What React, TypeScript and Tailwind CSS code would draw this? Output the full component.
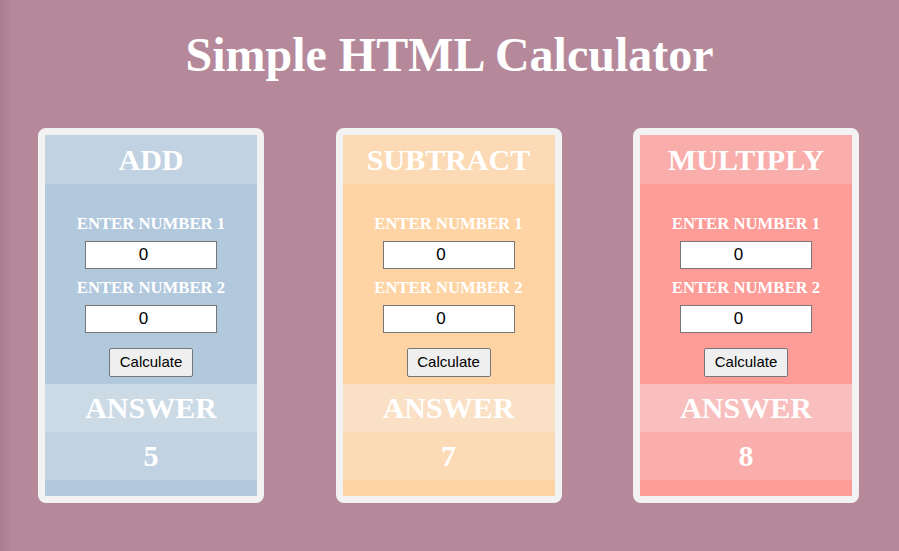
import { useState } from "react";

type Op = {
  title: string;
  fn: (a: number, b: number) => number;
  initial: number;
  body: string;
  head: string;
  answerHead: string;
  answerValue: string;
};

const ops: Op[] = [
  {
    title: "ADD",
    fn: (a, b) => a + b,
    initial: 5,
    body: "bg-[#b2c8dd]",
    head: "bg-[#c1d2e2]",
    answerHead: "bg-[#ccdae6]",
    answerValue: "bg-[#c1d2e2]",
  },
  {
    title: "SUBTRACT",
    fn: (a, b) => a - b,
    initial: 7,
    body: "bg-[#fed4a4]",
    head: "bg-[#fcdab5]",
    answerHead: "bg-[#fae0c5]",
    answerValue: "bg-[#fcdab5]",
  },
  {
    title: "MULTIPLY",
    fn: (a, b) => a * b,
    initial: 8,
    body: "bg-[#fe9c98]",
    head: "bg-[#faaeab]",
    answerHead: "bg-[#f8bfbe]",
    answerValue: "bg-[#faaeab]",
  },
];

function CalcCard({ op }: { op: Op }) {
  const [a, setA] = useState("0");
  const [b, setB] = useState("0");
  const [answer, setAnswer] = useState<number>(op.initial);

  return (
    <div className="w-[226px] rounded-[8px] border-[7px] border-[#f2f2f2] bg-[#f2f2f2]">
      <div className={`${op.body} flex flex-col text-white`}>
        <h2 className={`${op.head} h-[49px] text-center text-[30px] font-bold leading-[49px]`}>
          {op.title}
        </h2>

        <div className="flex flex-col items-center pt-[30px] pb-[7px]">
          <label className="text-[16.7px] font-bold leading-[20px]">ENTER NUMBER 1</label>
          <input
            value={a}
            onChange={(e) => setA(e.target.value)}
            className="mt-[7px] h-[28px] w-[132px] border border-[#767676] bg-white pr-[15px] text-center font-['Liberation_Sans',sans-serif] text-[17px] text-black outline-none"
          />
          <label className="mt-[9px] text-[16.7px] font-bold leading-[20px]">ENTER NUMBER 2</label>
          <input
            value={b}
            onChange={(e) => setB(e.target.value)}
            className="mt-[7px] h-[28px] w-[132px] border border-[#767676] bg-white pr-[15px] text-center font-['Liberation_Sans',sans-serif] text-[17px] text-black outline-none"
          />
          <button
            onClick={() => setAnswer(op.fn(Number(a) || 0, Number(b) || 0))}
            className="mt-[15px] h-[29px] w-[84px] rounded-[2px] border border-[#767676] bg-[#efefef] font-['Liberation_Sans',sans-serif] text-[15px] text-black"
          >
            Calculate
          </button>
        </div>

        <h2 className={`${op.answerHead} h-[48px] text-center text-[30px] font-bold leading-[48px]`}>
          ANSWER
        </h2>
        <div className={`${op.answerValue} h-[48px] text-center text-[30px] font-bold leading-[48px]`}>
          {answer}
        </div>
        <div className="h-[16px]" />
      </div>
    </div>
  );
}

export default function App() {
  return (
    <div className="min-h-screen bg-[#b5899a] bg-[linear-gradient(to_right,#a97d8e,#b5899a_12px)] font-['Liberation_Serif',serif]">
      <h1 className="pt-[31px] text-center text-[48px] font-bold leading-[48px] text-white">
        Simple HTML Calculator
      </h1>
      <div className="mt-[49px] flex gap-[71.5px] pl-[38px]">
        {ops.map((op) => (
          <CalcCard key={op.title} op={op} />
        ))}
      </div>
    </div>
  );
}
